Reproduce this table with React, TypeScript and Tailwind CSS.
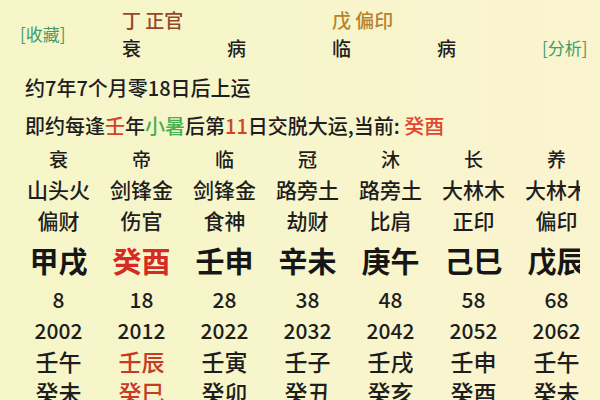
import React from "react";

const cols = [
  { s: "衰", n: "山头火", g: "偏财", gz: "甲戌", age: "8", year: "2002", y1: "壬午", y2: "癸未", red: false },
  { s: "帝", n: "剑锋金", g: "伤官", gz: "癸酉", age: "18", year: "2012", y1: "壬辰", y2: "癸巳", red: true },
  { s: "临", n: "剑锋金", g: "食神", gz: "壬申", age: "28", year: "2022", y1: "壬寅", y2: "癸卯", red: false },
  { s: "冠", n: "路旁土", g: "劫财", gz: "辛未", age: "38", year: "2032", y1: "壬子", y2: "癸丑", red: false },
  { s: "沐", n: "路旁土", g: "比肩", gz: "庚午", age: "48", year: "2042", y1: "壬戌", y2: "癸亥", red: false },
  { s: "长", n: "大林木", g: "正印", gz: "己巳", age: "58", year: "2052", y1: "壬申", y2: "癸酉", red: false },
  { s: "养", n: "大林木", g: "偏印", gz: "戊辰", age: "68", year: "2062", y1: "壬午", y2: "癸未", red: false },
];

export default function App() {
  return (
    <div
      className="w-[600px] h-[400px] overflow-hidden bg-gradient-to-r from-[#f5f6c8] to-[#faf4cf] text-[#1e1e1e] font-medium"
      style={{ fontFamily: '"Noto Sans CJK SC", "Noto Sans", sans-serif' }}
    >
      {/* top section */}
      <div className="flex pt-[6px] h-[64px]">
        <div className="w-[122px] pl-[20px] flex items-center pb-[4px]">
          <span className="text-[17px] text-[#3f9c6c] leading-none font-normal">[收藏]</span>
        </div>
        <div className="w-[420px] grid grid-cols-4 grid-rows-[28px_28px] text-[19px] leading-[28px]">
          <div className="col-span-2 text-[#95482a]">丁 正官</div>
          <div className="col-span-2 text-[#b7832c]">戊 偏印</div>
          <div>衰</div>
          <div>病</div>
          <div>临</div>
          <div>病</div>
        </div>
        <div className="flex items-end pb-[2px]">
          <span className="text-[17px] text-[#3f9c6c] leading-[28px] font-normal">[分析]</span>
        </div>
      </div>

      {/* info lines */}
      <div className="pl-[25px] text-[20px]">
        <div className="h-[34px] leading-[34px] mt-[7px]">约7年7个月零18日后上运</div>
        <div className="h-[34px] leading-[34px] mt-[4px] whitespace-nowrap">
          即约每逢<span className="text-[#d2432a]">壬</span>年<span className="text-[#45b04f]">小暑</span>后第<span className="text-[#d2432a]">11</span>日交脱大运,当前: <span className="text-[#e0452f]">癸酉</span>
        </div>
      </div>

      {/* columns */}
      <div className="ml-[17px] w-[563px] overflow-hidden">
        <div className="flex w-[581px]">
          {cols.map((c) => (
            <div key={c.age} className="w-[83px] shrink-0 flex flex-col items-center whitespace-nowrap">
              <div className="h-[31px] leading-[31px] text-[19px]">{c.s}</div>
              <div className="h-[31px] leading-[31px] text-[21px]">{c.n}</div>
              <div className="h-[31px] leading-[31px] text-[21px]">{c.g}</div>
              <div
                className={`h-[48px] leading-[48px] text-[29px] font-bold ${c.red ? "text-[#d62a24]" : "text-[#161616]"}`}
              >
                {c.gz}
              </div>
              <div className="h-[31px] leading-[31px] text-[21px]">{c.age}</div>
              <div className="h-[31px] leading-[31px] text-[21px]">{c.year}</div>
              <div className={`h-[31px] leading-[31px] text-[23px] ${c.red ? "text-[#c83a28]" : ""}`}>{c.y1}</div>
              <div className={`h-[31px] leading-[31px] text-[23px] ${c.red ? "text-[#c83a28]" : ""}`}>{c.y2}</div>
            </div>
          ))}
        </div>
      </div>
    </div>
  );
}
